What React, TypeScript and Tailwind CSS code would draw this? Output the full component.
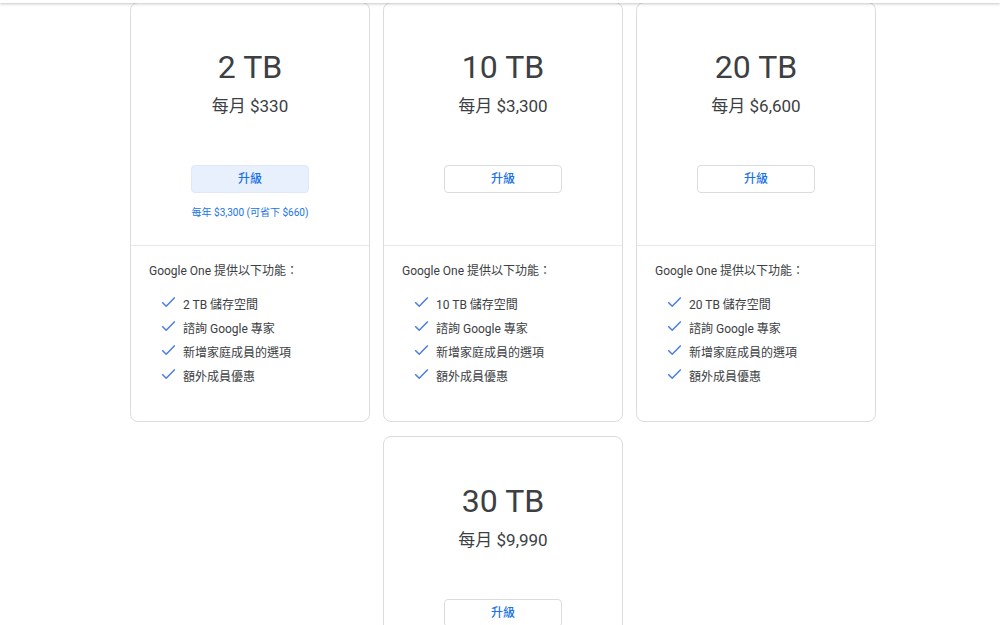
import React from "react";

const font = { fontFamily: 'Roboto, "Noto Sans CJK TC", sans-serif' };

type Plan = { size: string; price: string; note?: string; active?: boolean; features?: boolean };

const plans: Plan[] = [
  { size: "2 TB", price: "每月 $330", note: "每年 $3,300 (可省下 $660)", active: true, features: true },
  { size: "10 TB", price: "每月 $3,300", features: true },
  { size: "20 TB", price: "每月 $6,600", features: true },
  { size: "30 TB", price: "每月 $9,990", features: false },
];

function Check() {
  return (
    <svg width="15" height="12" viewBox="0 0 15 12" className="shrink-0">
      <path d="M1.2 6.2 L5.2 10.2 L13.8 1.4" fill="none" stroke="#4a7de0" strokeWidth="1.5" />
    </svg>
  );
}

function Card({ plan, extra }: { plan: Plan; extra?: string }) {
  const items = [`${plan.size} 儲存空間`, "諮詢 Google 專家", "新增家庭成員的選項", "額外成員優惠"];
  return (
    <div className={`rounded-[8px] border border-[#dadce0] bg-white flex flex-col ${extra ?? ""}`}>
      <div className="h-[243px] flex flex-col items-center pt-[44px] border-b border-[#e8eaed]">
        <div className="text-[32px] leading-[40px] text-[#3c4043]">{plan.size}</div>
        <div className="mt-[7px] text-[17px] leading-[24px] text-[#3c4043]">{plan.price}</div>
        <button
          className={`mt-[47px] w-[118px] h-[28px] rounded-[4px] text-[12px] font-medium text-[#1a73e8] ${
            plan.active ? "bg-[#e8f0fe] border border-[#e0e8f7]" : "bg-white border border-[#dadce0]"
          }`}
        >
          升級
        </button>
        {plan.note && (
          <div className="mt-[12px] text-[10px] leading-[16px] text-[#1a73e8]">{plan.note}</div>
        )}
      </div>
      {plan.features && (
        <div className="pt-[16px] pb-[32px] px-[18px]">
          <div className="text-[12px] leading-[18px] text-[#3c4043]">Google One 提供以下功能：</div>
          <div className="mt-[13px] flex flex-col">
            {items.map((t) => (
              <div key={t} className="flex items-center h-[24px] pl-[12px] gap-[7px]">
                <div className="-mt-[6px]">
                  <Check />
                </div>
                <span className="text-[12px] text-[#3c4043]">{t}</span>
              </div>
            ))}
          </div>
        </div>
      )}
    </div>
  );
}

export default function App() {
  return (
    <div className="relative w-[1000px] h-[625px] overflow-hidden bg-white" style={font}>
      <div className="absolute top-0 left-0 right-0 h-[3px] bg-white shadow-[0_1px_3px_rgba(60,64,67,0.3)] z-10" />
      <div className="ml-[130px] mt-[2px] w-[746px] grid grid-cols-[240px_240px_240px] gap-x-[13px] gap-y-[14px]">
        <Card plan={plans[0]} />
        <Card plan={plans[1]} />
        <Card plan={plans[2]} />
        <Card plan={plans[3]} extra="col-start-2 h-[419px]" />
      </div>
    </div>
  );
}
